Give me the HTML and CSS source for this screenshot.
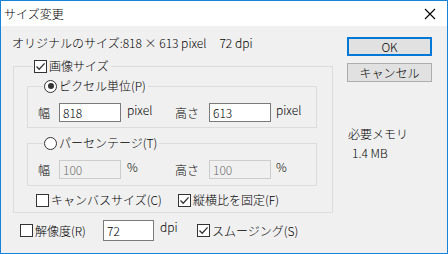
FILE: index.html
```html
<!DOCTYPE html>
<html>
    <head>
        <meta charset="utf-8">
        <title>サイズ変更</title>
        <link rel="stylesheet" href="styles.css">
    </head>
    <body>
        <div class="window">
            <div class="titlebar">
                <span class="title">サイズ変更</span>
                <svg class="close" width="12" height="12" viewBox="0 0 12 12">
                    <path d="M1 1 L11 11 M11 1 L1 11" stroke="#000" stroke-width="1.1" fill="none"/>
                </svg>
            </div>
            <div class="content">
                <div class="main">
                    <div class="info">
                        <span>オリジナルのサイズ:818 × 613 pixel</span>
                        <span class="info_dpi">72 dpi</span>
                    </div>

                    <fieldset class="group outer">
                        <legend><span class="box on"></span>画像サイズ</legend>

                        <fieldset class="group inner">
                            <legend><span class="radio on"></span>ピクセル単位(P)</legend>
                            <div class="row">
                                <span class="lbl w">幅</span>
                                <span class="field">818</span>
                                <span class="unit">pixel</span>
                                <span class="lbl h">高さ</span>
                                <span class="field">613</span>
                                <span class="unit">pixel</span>
                            </div>
                        </fieldset>

                        <fieldset class="group inner second">
                            <legend><span class="radio"></span>パーセンテージ(T)</legend>
                            <div class="row disabled">
                                <span class="lbl w">幅</span>
                                <span class="field">100</span>
                                <span class="unit">%</span>
                                <span class="lbl h">高さ</span>
                                <span class="field">100</span>
                                <span class="unit">%</span>
                            </div>
                        </fieldset>

                        <div class="opts">
                            <label class="opt canvas"><span class="box"></span>キャンバスサイズ(C)</label>
                            <label class="opt"><span class="box on"></span>縦横比を固定(F)</label>
                        </div>
                    </fieldset>

                    <div class="bottom">
                        <label class="opt res"><span class="box"></span>解像度(R)</label>
                        <span class="field dpi_field">72</span>
                        <span class="unit">dpi</span>
                        <label class="opt smooth"><span class="box on"></span>スムージング(S)</label>
                    </div>
                </div>

                <div class="side">
                    <button class="btn default">OK</button>
                    <button class="btn">キャンセル</button>
                    <div class="mem">必要メモリ</div>
                    <div class="mem_val">1.4 MB</div>
                </div>
            </div>
        </div>
    </body>
</html>
```

FILE: styles.css
```css
body{
    margin: 0;
    padding: 0;
    font-family: "Noto Sans CJK JP", sans-serif;
    font-size: 12px;
    font-weight: 300;
    line-height: 16px;
    color: #000;
}

.window{
    width: 448px;
    height: 254px;
    box-sizing: border-box;
    border: 1px solid #1883d7;
    background: #f0f0f0;
}

.titlebar{
    height: 25px;
    background: white;
    display: flex;
    align-items: center;
    justify-content: space-between;
    padding: 0 11px 0 3px;
}

.title{
    line-height: 16px;
}

.content{
    display: flex;
    padding: 0 15px 0 12px;
}

.main{
    width: 320px;
    padding-top: 9px;
}

.info{
    display: flex;
    margin-left: -1px;
}

.info_dpi{
    margin-left: 13px;
}

.group{
    margin: 0;
    padding: 0;
    border: 1px solid #dcdcdc;
    min-width: 0;
}

.group legend{
    display: flex;
    align-items: center;
    height: 16px;
    padding: 0 2px 0 1px;
    margin-left: 6px;
}

.outer{
    margin-top: 7px;
    padding: 4px 15px 4px 13px;
}

.inner{
    padding: 9px 0 5px 10px;
}

.inner legend{
    margin-left: 5px;
}

.second{
    margin-top: 7px;
    padding-bottom: 6px;
}

.box{
    width: 11px;
    height: 11px;
    border: 1px solid #333;
    background: white;
    margin-right: 2px;
    flex: none;
}

.box.on{
    background: white url("data:image/svg+xml;utf8,<svg xmlns='http://www.w3.org/2000/svg' width='11' height='11'><path d='M1.5 5.5 L4.2 8.3 L9.6 2.4' stroke='%23333' stroke-width='1.3' fill='none'/></svg>") no-repeat;
}

.radio{
    width: 11px;
    height: 11px;
    border: 1px solid #333;
    border-radius: 50%;
    background: white;
    margin-right: 2px;
    flex: none;
    display: flex;
    align-items: center;
    justify-content: center;
}

.radio.on::after{
    content: '';
    width: 6px;
    height: 6px;
    border-radius: 50%;
    background: #333;
}

.row{
    display: flex;
    align-items: center;
}

.row > span{
    flex: none;
}

.lbl.w{
    width: 21px;
}

.lbl.h{
    width: 34px;
}

.field{
    width: 62px;
    height: 19px;
    box-sizing: border-box;
    border: 1px solid #7a7a7a;
    background: white;
    padding: 0 3px;
    line-height: 17px;
}

.unit{
    margin-left: 6px;
    width: 48px;
    align-self: flex-start;
    margin-top: -1px;
}

.row .unit:last-child{
    width: auto;
    margin-left: 5px;
}

.disabled .field{
    border-color: #cccccc;
    background: #f0f0f0;
    color: #6d6d6d;
}

.opts{
    display: flex;
    margin-top: 6px;
    height: 16px;
    align-items: center;
}

.opt{
    display: flex;
    align-items: center;
}

.canvas{
    margin-left: 9px;
    width: 142px;
}

.bottom{
    display: flex;
    align-items: center;
    margin-top: 7px;
    padding-left: 7px;
}

.res{
    width: 83px;
}

.dpi_field{
    width: 51px;
    height: 21px;
    line-height: 19px;
}

.bottom .unit{
    width: 37px;
}

.side{
    margin-left: 14px;
    width: 85px;
    padding-top: 11px;
    display: flex;
    flex-direction: column;
}

.btn{
    height: 19px;
    box-sizing: border-box;
    border: 1px solid #adadad;
    background: #e1e1e1;
    font-family: inherit;
    font-size: 12px;
    font-weight: 300;
    line-height: 16px;
    padding: 0;
    color: #000;
}

.btn.default{
    border: 2px solid #0078d7;
    margin-bottom: 7px;
}

.mem{
    margin-top: 44px;
    padding-left: 1px;
}

.mem_val{
    margin-top: 3px;
    padding-left: 5px;
}
```
